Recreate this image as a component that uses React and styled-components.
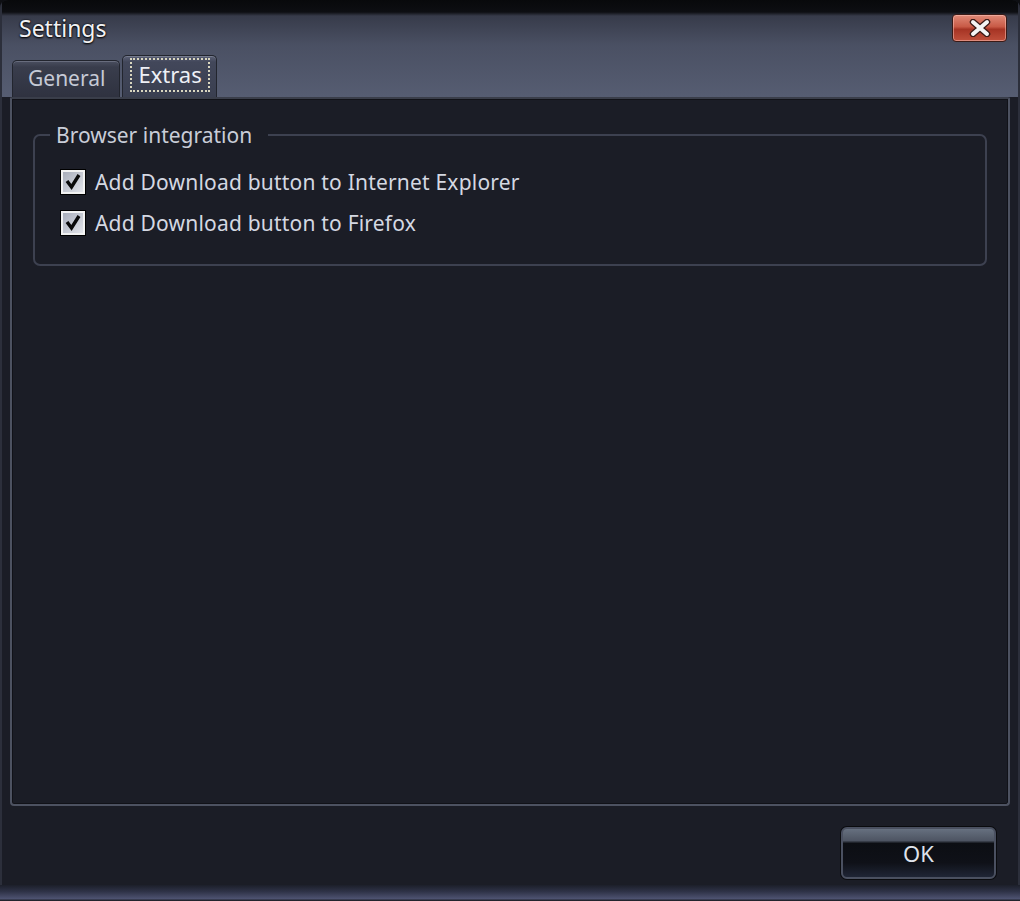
import React from 'react';
import styled, { createGlobalStyle } from 'styled-components';

const Global = createGlobalStyle`
  html, body { margin: 0; padding: 0; background: #0e0f13; }
  body { font-family: "Noto Sans", "DejaVu Sans", sans-serif; }
`;

const Window = styled.div`
  width: 1020px;
  height: 901px;
  box-sizing: border-box;
  display: flex;
  flex-direction: column;
  background: #1b1d26;
  border-radius: 8px 8px 0 0;
  overflow: hidden;
`;

const Chrome = styled.div`
  height: 97px;
  flex: none;
  display: flex;
  flex-direction: column;
  background: linear-gradient(#08090b 0px, #0d0e12 12px, #373b4a 16px, #4a5063 45px, #565d72 97px);
  border-left: 2px solid #2c2f3b;
  border-right: 2px solid #2c2f3b;
`;

const TitleRow = styled.div`
  height: 55px;
  display: flex;
  align-items: center;
  justify-content: space-between;
  padding: 0 11px 0 17px;
  box-sizing: border-box;
`;

const Title = styled.div`
  color: #f2f2f4;
  font-size: 23px;
  margin-top: 0;
  text-shadow: 0 1px 2px #000, 0 0 2px #000;
`;

const CloseButton = styled.button`
  width: 55px;
  height: 28px;
  border: 1px solid #3a1a16;
  border-radius: 4px;
  background: linear-gradient(#e08a78 0%, #c85a46 45%, #a63424 55%, #c0503c 100%);
  box-shadow: inset 0 0 0 1px rgba(255, 200, 190, 0.5);
  display: flex;
  align-items: center;
  justify-content: center;
  padding: 0;
`;

const TabRow = styled.div`
  flex: 1;
  display: flex;
  align-items: flex-end;
  gap: 2px;
  padding-left: 10px;
`;

const Tab = styled.div`
  height: ${p => (p.$active ? '42px' : '37px')};
  box-sizing: border-box;
  padding: ${p => (p.$active ? '2px 6px 6px 7px' : '0 14px 2px 15px')};
  display: flex;
  align-items: center;
  color: ${p => (p.$active ? '#eef0f6' : '#c6cad6')};
  font-size: ${p => (p.$active ? '22px' : '21px')};
  border: 1px solid #22252e;
  border-bottom: none;
  border-radius: 5px 5px 0 0;
  background: ${p =>
    p.$active
      ? 'linear-gradient(#5c6276 0px, #42475a 6px, #3a3f50 100%)'
      : 'linear-gradient(#4a4f60 0px, #393d4c 6px, #2f3240 100%)'};
  box-shadow: inset 0 1px 0 rgba(200, 205, 220, 0.25);
`;

const Focus = styled.span`
  border: 2px dotted #d9d6bf;
  padding: 0 6px 2px;
  line-height: 28px;
`;

const Body = styled.div`
  flex: 1;
  display: flex;
  flex-direction: column;
  padding: 0 8px;
  border-left: 2px solid #2c2f3b;
  border-right: 2px solid #2c2f3b;
`;

const Panel = styled.div`
  height: 709px;
  box-sizing: border-box;
  border: 2px solid #4d5261;
  border-top-color: #3a3e4a;
  border-radius: 2px 2px 4px 4px;
  background: #1b1d26;
  box-shadow: inset 0 0 0 1px #111218;
  padding: 24px 21px 0 21px;
`;

const Group = styled.fieldset`
  margin: 0;
  height: 143px;
  box-sizing: border-box;
  border: 2px solid #3d4150;
  border-radius: 7px;
  padding: 14px 0 0 26px;
`;

const Legend = styled.legend`
  color: #c9cdd8;
  font-size: 21px;
  padding: 0 16px 0 6px;
  margin-left: -11px;
  line-height: 24px;
`;

const CheckRow = styled.label`
  display: flex;
  align-items: center;
  gap: 10px;
  height: 41px;
  color: #d4d8e2;
  font-size: 21px;
  letter-spacing: 0.2px;
`;

const Box = styled.span`
  width: 24px;
  height: 24px;
  box-sizing: border-box;
  border: 2px solid #f2f2f2;
  outline: 1px solid #000;
  background: linear-gradient(135deg, #a8adba, #e2e4ea);
  display: flex;
  align-items: center;
  justify-content: center;
`;

const Footer = styled.div`
  flex: 1;
  display: flex;
  justify-content: flex-end;
  align-items: flex-start;
  padding: 21px 14px 0 0;
`;

const OkButton = styled.button`
  width: 155px;
  height: 52px;
  border: 2px solid #4a5060;
  border-radius: 6px;
  background: linear-gradient(#66707f 0%, #4e5563 24%, #0c0e13 30%, #0f1118 70%, #1f2535 100%);
  color: #dfe2ea;
  font-family: "Noto Sans", "DejaVu Sans", sans-serif;
  font-size: 22px;
  padding: 0;
  box-shadow: 0 0 0 1px #0a0b0e;
`;

const BottomEdge = styled.div`
  height: 16px;
  flex: none;
  background: linear-gradient(#1c1f2a 0%, #2e3246 40%, #4d5270 85%, #16171c 100%);
`;

function Check() {
  return (
    <Box>
      <svg width="18" height="18" viewBox="0 0 18 18">
        <path d="M3 8 L7.5 14 L15 2" fill="none" stroke="#0a0a0a" strokeWidth="3.4" strokeLinejoin="miter" />
      </svg>
    </Box>
  );
}

export default function App() {
  return (
    <>
      <Global />
      <Window>
        <Chrome>
          <TitleRow>
            <Title>Settings</Title>
            <CloseButton aria-label="Close">
              <svg width="24" height="18" viewBox="0 0 24 18">
                <path d="M5 3 L19 15 M19 3 L5 15" stroke="#3a1a16" strokeWidth="6.5" strokeLinecap="round" />
                <path d="M5 3 L19 15 M19 3 L5 15" stroke="#f4f4f4" strokeWidth="4" strokeLinecap="round" />
              </svg>
            </CloseButton>
          </TitleRow>
          <TabRow>
            <Tab>General</Tab>
            <Tab $active>
              <Focus>Extras</Focus>
            </Tab>
          </TabRow>
        </Chrome>
        <Body>
          <Panel>
            <Group>
              <Legend>Browser integration</Legend>
              <CheckRow>
                <Check />
                Add Download button to Internet Explorer
              </CheckRow>
              <CheckRow>
                <Check />
                Add Download button to Firefox
              </CheckRow>
            </Group>
          </Panel>
          <Footer>
            <OkButton>OK</OkButton>
          </Footer>
        </Body>
        <BottomEdge />
      </Window>
    </>
  );
}
